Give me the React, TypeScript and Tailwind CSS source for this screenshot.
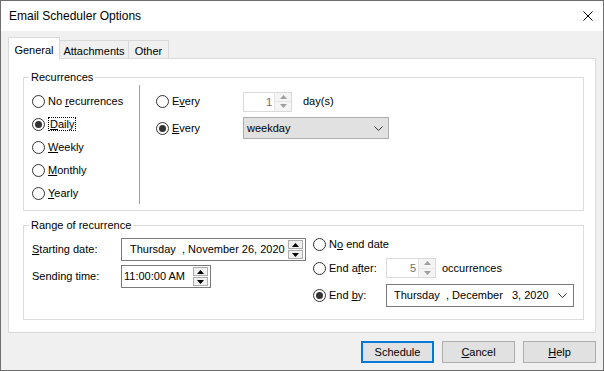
import type { ReactNode } from "react"
import cn from "clsx"

function Radio({ checked, children, className }: { checked?: boolean; children: ReactNode; className?: string }) {
  return (
    <div className={cn("flex items-center", className)}>
      <span className="flex h-[13px] w-[13px] shrink-0 items-center justify-center rounded-full border border-[#333] bg-white">
        {checked && <span className="h-[7px] w-[7px] rounded-full bg-[#333]" />}
      </span>
      <span className="ml-[3px] whitespace-nowrap">{children}</span>
    </div>
  )
}

function Tri({ up, color = "#000" }: { up?: boolean; color?: string }) {
  return (
    <svg width="7" height="4" viewBox="0 0 7 4">
      <polygon points={up ? "3.5,0 7,4 0,4" : "0,0 7,0 3.5,4"} fill={color} />
    </svg>
  )
}

function Chevron() {
  return (
    <svg width="9" height="5" viewBox="0 0 9 5">
      <polyline points="0.5,0.5 4.5,4.5 8.5,0.5" fill="none" stroke="#333" strokeWidth="1" />
    </svg>
  )
}

// enabled spinner: two little boxes stacked
function Spinner() {
  return (
    <div className="flex w-[15px] flex-col gap-px">
      <div className="flex h-[9px] items-center justify-center border border-[#adadad] bg-[#f0f0f0]">
        <Tri up />
      </div>
      <div className="flex h-[9px] items-center justify-center border border-[#adadad] bg-[#f0f0f0]">
        <Tri />
      </div>
    </div>
  )
}

function DisabledSpin({ value, className }: { value: string; className?: string }) {
  return (
    <div className={cn("flex h-[20px] border border-[#d9d9d9] bg-white", className)}>
      <div className="flex-1 pr-[2px] text-right leading-[18px] text-[#6d6d6d]">{value}</div>
      <div className="flex w-[17px] flex-col border-l border-[#e6e6e6] bg-[#f4f4f4]">
        <div className="flex flex-1 items-center justify-center border-b border-[#e6e6e6]">
          <Tri up color="#a0a0a0" />
        </div>
        <div className="flex flex-1 items-center justify-center">
          <Tri color="#a0a0a0" />
        </div>
      </div>
    </div>
  )
}

function Group({ title, className, children }: { title: string; className?: string; children: ReactNode }) {
  return (
    <fieldset className={cn("border border-[#dcdcdc]", className)}>
      <legend className="ml-[5px] px-[2px] leading-[15px]">{title}</legend>
      {children}
    </fieldset>
  )
}

export default function App() {
  return (
    <div className="flex h-[371px] w-[604px] flex-col border border-[#6f6f6f] bg-[#f0f0f0] font-['Liberation_Sans',Arial,sans-serif] text-[11px] text-black">
      {/* title bar */}
      <div className="flex h-[30px] items-center justify-between bg-white pl-[8px] pr-[10px] text-[12px]">
        <span>Email Scheduler Options</span>
        <svg width="10" height="10" viewBox="0 0 10 10">
          <path d="M0.5 0.5 L9.5 9.5 M9.5 0.5 L0.5 9.5" stroke="#000" strokeWidth="1" />
        </svg>
      </div>

      <div className="flex flex-1 flex-col px-[7px] pt-[6px]">
        {/* tabs */}
        <div className="flex h-[21px] items-start">
          <div className="relative z-10 -mb-px flex h-[22px] w-[52px] justify-center border-x border-t border-[#d9d9d9] bg-white pt-[4px]">
            General
          </div>
          <div className="mt-[3px] flex h-[18px] w-[69px] justify-center border-r border-t border-[#d9d9d9] pt-[2px]">
            Attachments
          </div>
          <div className="mt-[3px] flex h-[18px] w-[40px] justify-center border-r border-t border-[#d9d9d9] pt-[2px]">
            Other
          </div>
        </div>

        {/* panel */}
        <div className="h-[275px] border border-[#d9d9d9] bg-white pl-[14px] pr-[11px]">
          <Group title="Recurrences" className="mt-[11px] h-[141px]">
            <div className="flex">
              <div className="w-[115px] pl-[8px] pt-[5px]">
                <Radio className="h-[23px]">
                  No <u>r</u>ecurrences
                </Radio>
                <Radio checked className="h-[23px]">
                  <span className="border border-dotted border-black px-px">
                    <u>D</u>aily
                  </span>
                </Radio>
                <Radio className="h-[23px]">
                  <u>W</u>eekly
                </Radio>
                <Radio className="h-[23px]">
                  <u>M</u>onthly
                </Radio>
                <Radio className="h-[23px]">
                  <u>Y</u>early
                </Radio>
              </div>
              <div className="h-[119px] w-px bg-[#a0a0a0]" />
              <div className="pl-[16px] pt-[6px]">
                <div className="flex h-[21px] items-center">
                  <Radio className="w-[87px]">
                    E<u>v</u>ery
                  </Radio>
                  <DisabledSpin value="1" className="w-[49px]" />
                  <span className="ml-[11px]">day(s)</span>
                </div>
                <div className="mt-[5px] flex h-[22px] items-center">
                  <Radio checked className="w-[87px]">
                    <u>E</u>very
                  </Radio>
                  <div className="flex h-[22px] w-[146px] items-center justify-between border border-[#adadad] bg-[#e1e1e1] pl-[3px] pr-[5px]">
                    <span>weekday</span>
                    <Chevron />
                  </div>
                </div>
              </div>
            </div>
          </Group>

          <Group title="Range of recurrence" className="mt-[7px] h-[102px]">
            <div className="flex">
              <div className="pl-[8px] pt-[5px]">
                <div className="flex h-[23px] items-center">
                  <span className="w-[89px]">
                    <u>S</u>tarting date:
                  </span>
                  <div className="flex h-[23px] w-[185px] items-center justify-between border border-[#7a7a7a] bg-white pl-[8px] pr-[2px]">
                    <span className="whitespace-pre">Thursday  , November 26, 2020</span>
                    <Spinner />
                  </div>
                </div>
                <div className="mt-[4px] flex h-[23px] items-center">
                  <span className="w-[89px]">Sending time:</span>
                  <div className="flex h-[23px] w-[90px] items-center justify-between border border-[#7a7a7a] bg-white pl-[2px] pr-[2px]">
                    <span>11:00:00 AM</span>
                    <Spinner />
                  </div>
                </div>
              </div>
              <div className="ml-[7px] pt-[1px]">
                <div className="flex h-[20px] items-center">
                  <Radio>
                    N<u>o</u> end date
                  </Radio>
                </div>
                <div className="mt-[4px] flex h-[20px] items-center">
                  <Radio className="w-[73px]">
                    End a<u>f</u>ter:
                  </Radio>
                  <DisabledSpin value="5" className="w-[50px]" />
                  <span className="ml-[6px]">occurrences</span>
                </div>
                <div className="mt-[6px] flex h-[23px] items-center">
                  <Radio checked className="w-[73px]">
                    End <u>b</u>y:
                  </Radio>
                  <div className="flex h-[23px] w-[188px] items-center justify-between border border-[#7a7a7a] bg-white pl-[7px] pr-[6px]">
                    <span className="whitespace-pre">Thursday  , December   3, 2020</span>
                    <Chevron />
                  </div>
                </div>
              </div>
            </div>
          </Group>
        </div>

        {/* buttons */}
        <div className="mt-[8px] flex justify-end gap-[8px]">
          <button className="h-[22px] w-[73px] border-2 border-[#0078d7] bg-[#e1e1e1]">Schedule</button>
          <button className="h-[22px] w-[73px] border border-[#adadad] bg-[#e1e1e1]">
            <u>C</u>ancel
          </button>
          <button className="h-[22px] w-[73px] border border-[#adadad] bg-[#e1e1e1]">
            <u>H</u>elp
          </button>
        </div>
      </div>
    </div>
  )
}
